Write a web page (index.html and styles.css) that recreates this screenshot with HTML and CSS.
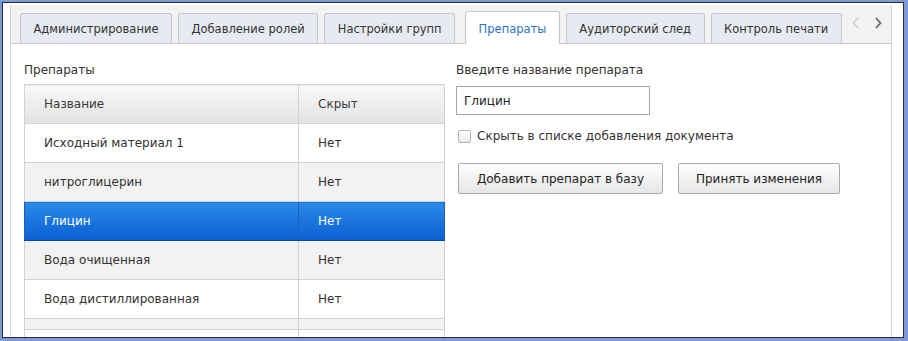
FILE: index.html
```html
<!DOCTYPE html>
<html lang="ru">
<head>
<meta charset="utf-8">
<title>Препараты</title>
<link rel="stylesheet" href="styles.css">
</head>
<body>
<div class="frame">
  <div class="inner">
    <div class="tabstrip">
      <div class="tabs">
        <div class="tab">Администрирование</div>
        <div class="tab">Добавление ролей</div>
        <div class="tab">Настройки групп</div>
        <div class="tab active">Препараты</div>
        <div class="tab">Аудиторский след</div>
        <div class="tab">Контроль печати</div>
      </div>
      <div class="arrows">
        <svg class="arr" width="10" height="12" viewBox="0 0 10 12"><path d="M7 1 L2.5 6 L7 11" fill="none" stroke="#cfcfcf" stroke-width="1.6"/></svg>
        <svg class="arr" width="10" height="12" viewBox="0 0 10 12"><path d="M3 1 L7.5 6 L3 11" fill="none" stroke="#6a6a6a" stroke-width="1.8"/></svg>
      </div>
    </div>
    <div class="panel">
      <div class="left">
        <div class="caption">Препараты</div>
        <table class="grid">
          <thead>
            <tr><th class="c-name">Название</th><th class="c-hid">Скрыт</th></tr>
          </thead>
          <tbody>
            <tr><td>Исходный материал 1</td><td>Нет</td></tr>
            <tr class="alt"><td>нитроглицерин</td><td>Нет</td></tr>
            <tr class="sel"><td>Глицин</td><td>Нет</td></tr>
            <tr class="alt"><td>Вода очищенная</td><td>Нет</td></tr>
            <tr><td>Вода дистиллированная</td><td>Нет</td></tr>
            <tr class="alt short"><td></td><td></td></tr>
            <tr class="short"><td></td><td></td></tr>
          </tbody>
        </table>
      </div>
      <div class="right">
        <div class="caption">Введите название препарата</div>
        <div class="input">Глицин</div>
        <label class="check"><span class="box"></span><span>Скрыть в списке добавления документа</span></label>
        <div class="buttons">
          <div class="btn btn-add">Добавить препарат в базу</div>
          <div class="btn btn-apply">Принять изменения</div>
        </div>
      </div>
    </div>
  </div>
</div>
</body>
</html>
```
FILE: styles.css
```css
* { box-sizing: border-box; }
html, body { margin: 0; padding: 0; background: #ffffff; }
body {
  font-family: "DejaVu Sans", "Liberation Sans", sans-serif;
  font-size: 12px;
  color: #333333;
}
.frame {
  width: 908px;
  height: 341px;
  border-style: solid;
  border-color: #7f9ad8;
  border-width: 2px 4px 3px 2px;
}
.inner {
  height: 100%;
  border: 1px solid #2c2c2c;
  background: #ffffff;
  padding: 2px 11px 0 7px;
  overflow: hidden;
  display: flex;
  flex-direction: column;
}
.tabstrip {
  height: 39px;
  flex: none;
  background: #f2f2f2;
  border-left: 1px solid #d4d4d4;
  border-right: 1px solid #d4d4d4;
  border-bottom: 1px solid #c9c9c9;
  display: flex;
  align-items: flex-end;
  justify-content: space-between;
  padding-left: 9px;
}
.tabs {
  display: flex;
  align-items: flex-end;
  gap: 6px;
}
.tab {
  height: 30px;
  padding: 0 12.5px;
  border: 1px solid #c4c7cc;
  border-bottom: none;
  border-radius: 3px 3px 0 0;
  background: #e7ebf1;
  color: #333333;
  font-size: 11.5px;
  display: flex;
  align-items: center;
  white-space: nowrap;
}
.tab.active {
  height: 33px;
  margin-bottom: -1px;
  margin-left: 4px;
  background: #ffffff;
  color: #2a72c9;
  padding-top: 2px;
}
.arrows {
  display: flex;
  align-items: center;
  gap: 12px;
  height: 30px;
  padding-right: 8px;
  align-self: flex-end;
  margin-bottom: 5px;
}
.arr { display: block; }
.panel {
  flex: 1;
  border-left: 1px solid #d4d4d4;
  border-right: 1px solid #d4d4d4;
  background: #ffffff;
  display: flex;
  gap: 12px;
  padding-left: 13px;
}
.caption {
  margin-top: 16px;
  line-height: 20px;
  height: 20px;
  color: #333333;
}
.left { width: 420px; flex: none; }
.grid {
  margin-top: 4px;
  width: 420px;
  border-collapse: collapse;
  border: 1px solid #cfcfcf;
  table-layout: fixed;
}
.grid th, .grid td {
  height: 39px;
  padding: 0 0 0 19px;
  text-align: left;
  font-weight: normal;
  border: 1px solid #d2d2d2;
  color: #333333;
  white-space: nowrap;
}
.grid th {
  background: linear-gradient(#f8f8f8, #e3e3e3);
  color: #3a3a3a;
}
.c-name { width: 274px; }
.c-hid { width: 146px; }
.grid tr.alt td { background: #f2f2f2; }
.grid tr.sel td {
  background: linear-gradient(#2b8be8, #0b5fd3);
  color: #ffffff;
  border-color: #1a5fb8;
  border-bottom-color: #0a4aa8;
}
.grid tr.short td { height: 11px; }
.right { flex: 1; }
.input {
  margin-top: 6px;
  width: 194px;
  height: 29px;
  border: 1px solid #a8a8a8;
  padding-left: 7px;
  display: flex;
  align-items: center;
  color: #222222;
}
.check {
  margin-top: 13px;
  margin-left: 2px;
  display: flex;
  align-items: center;
  gap: 6px;
  height: 16px;
}
.box {
  width: 13px;
  height: 13px;
  border: 1px solid #b3b3b3;
  border-radius: 2px;
  background: linear-gradient(#ffffff, #e9e9e9);
}
.buttons {
  margin-top: 19px;
  margin-left: 2px;
  display: flex;
  gap: 15px;
}
.btn {
  height: 31px;
  border: 1px solid #ababab;
  border-radius: 2px;
  background: linear-gradient(#ffffff, #e6e6e6);
  display: flex;
  align-items: center;
  justify-content: center;
  color: #222222;
  white-space: nowrap;
}
.btn-add { width: 205px; }
.btn-apply { width: 162px; }
```
